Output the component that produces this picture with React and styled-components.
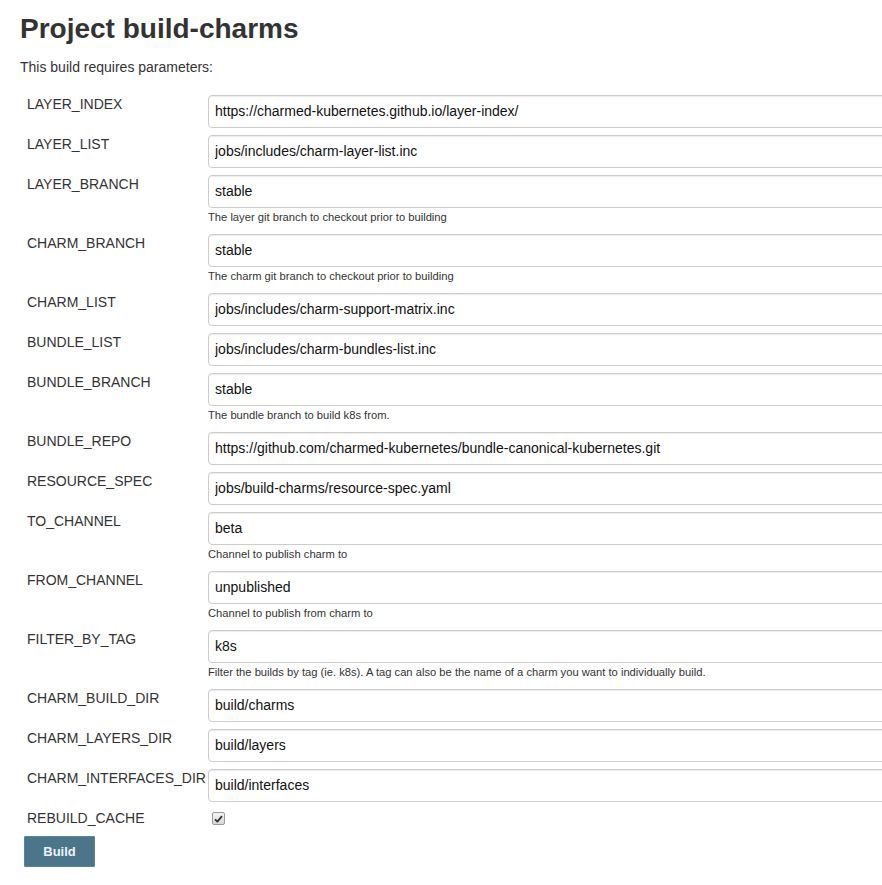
import React from 'react';
import styled, { createGlobalStyle } from 'styled-components';

const GlobalStyle = createGlobalStyle`
  html, body {
    margin: 0;
    padding: 0;
    background: #fff;
    overflow: hidden;
  }
  body {
    font-family: "Liberation Sans", Arial, Helvetica, sans-serif;
    color: #333;
  }
`;

const Page = styled.div`
  padding: 12px 0 0 20px;
`;

const Title = styled.h1`
  margin: 0;
  font-size: 28px;
  line-height: 34px;
  font-weight: 700;
  color: #333;
`;

const Intro = styled.p`
  margin: 11px 0 18px;
  font-size: 14px;
  line-height: 20px;
`;

const Form = styled.form`
  display: grid;
  grid-template-columns: 188px 720px;
  row-gap: 7px;
  align-items: start;
`;

const Label = styled.div`
  padding-left: 7px;
  font-size: 14px;
  line-height: 19px;
  color: #333;
  white-space: nowrap;
`;

const Field = styled.div`
  display: flex;
  flex-direction: column;
`;

const TextInput = styled.input`
  box-sizing: border-box;
  width: 100%;
  height: 33px;
  padding: 0 6px 1px;
  border: 1px solid #ccc;
  border-radius: 4px;
  box-shadow: inset 0 1px 1px rgba(0, 0, 0, 0.08);
  font-family: "Liberation Sans", Arial, sans-serif;
  font-size: 14px;
  color: #111;
  background: #fff;
  outline: none;
`;

const Description = styled.div`
  font-size: 11.2px;
  line-height: 19px;
  color: #333;
  white-space: nowrap;
`;

const CheckBox = styled.span`
  box-sizing: border-box;
  display: flex;
  align-items: center;
  justify-content: center;
  width: 13px;
  height: 13px;
  margin: 3px 0 0 4px;
  border: 1px solid #9a9a9a;
  border-radius: 2px;
  background: linear-gradient(#f4f4f4, #d8d8d8);
`;

const SubmitBar = styled.div`
  padding: 8px 0 0 4px;
`;

const BuildButton = styled.button`
  width: 71px;
  height: 31px;
  padding: 0;
  border: 1px solid #5a8499;
  border-radius: 1px;
  background: #4b758b;
  color: #eef3f6;
  font-family: "Liberation Sans", Arial, sans-serif;
  font-size: 13px;
  font-weight: 700;
`;

const params = [
  { name: 'LAYER_INDEX', value: 'https://charmed-kubernetes.github.io/layer-index/' },
  { name: 'LAYER_LIST', value: 'jobs/includes/charm-layer-list.inc' },
  { name: 'LAYER_BRANCH', value: 'stable', help: 'The layer git branch to checkout prior to building' },
  { name: 'CHARM_BRANCH', value: 'stable', help: 'The charm git branch to checkout prior to building' },
  { name: 'CHARM_LIST', value: 'jobs/includes/charm-support-matrix.inc' },
  { name: 'BUNDLE_LIST', value: 'jobs/includes/charm-bundles-list.inc' },
  { name: 'BUNDLE_BRANCH', value: 'stable', help: 'The bundle branch to build k8s from.' },
  { name: 'BUNDLE_REPO', value: 'https://github.com/charmed-kubernetes/bundle-canonical-kubernetes.git' },
  { name: 'RESOURCE_SPEC', value: 'jobs/build-charms/resource-spec.yaml' },
  { name: 'TO_CHANNEL', value: 'beta', help: 'Channel to publish charm to' },
  { name: 'FROM_CHANNEL', value: 'unpublished', help: 'Channel to publish from charm to' },
  {
    name: 'FILTER_BY_TAG',
    value: 'k8s',
    help: 'Filter the builds by tag (ie. k8s). A tag can also be the name of a charm you want to individually build.',
  },
  { name: 'CHARM_BUILD_DIR', value: 'build/charms' },
  { name: 'CHARM_LAYERS_DIR', value: 'build/layers' },
  { name: 'CHARM_INTERFACES_DIR', value: 'build/interfaces' },
];

const CheckIcon = () => (
  <svg width="9" height="8" viewBox="0 0 9 8">
    <path d="M1 4.3 L3.4 6.6 L8 1.2" fill="none" stroke="#333" strokeWidth="1.8" strokeLinejoin="round" />
  </svg>
);

export default function App() {
  return (
    <Page>
      <GlobalStyle />
      <Title>Project build-charms</Title>
      <Intro>This build requires parameters:</Intro>
      <Form onSubmit={(e) => e.preventDefault()}>
        {params.map((p) => (
          <React.Fragment key={p.name}>
            <Label>{p.name}</Label>
            <Field>
              <TextInput defaultValue={p.value} />
              {p.help && <Description>{p.help}</Description>}
            </Field>
          </React.Fragment>
        ))}
        <Label>REBUILD_CACHE</Label>
        <Field>
          <CheckBox>
            <CheckIcon />
          </CheckBox>
        </Field>
      </Form>
      <SubmitBar>
        <BuildButton type="button">Build</BuildButton>
      </SubmitBar>
    </Page>
  );
}
